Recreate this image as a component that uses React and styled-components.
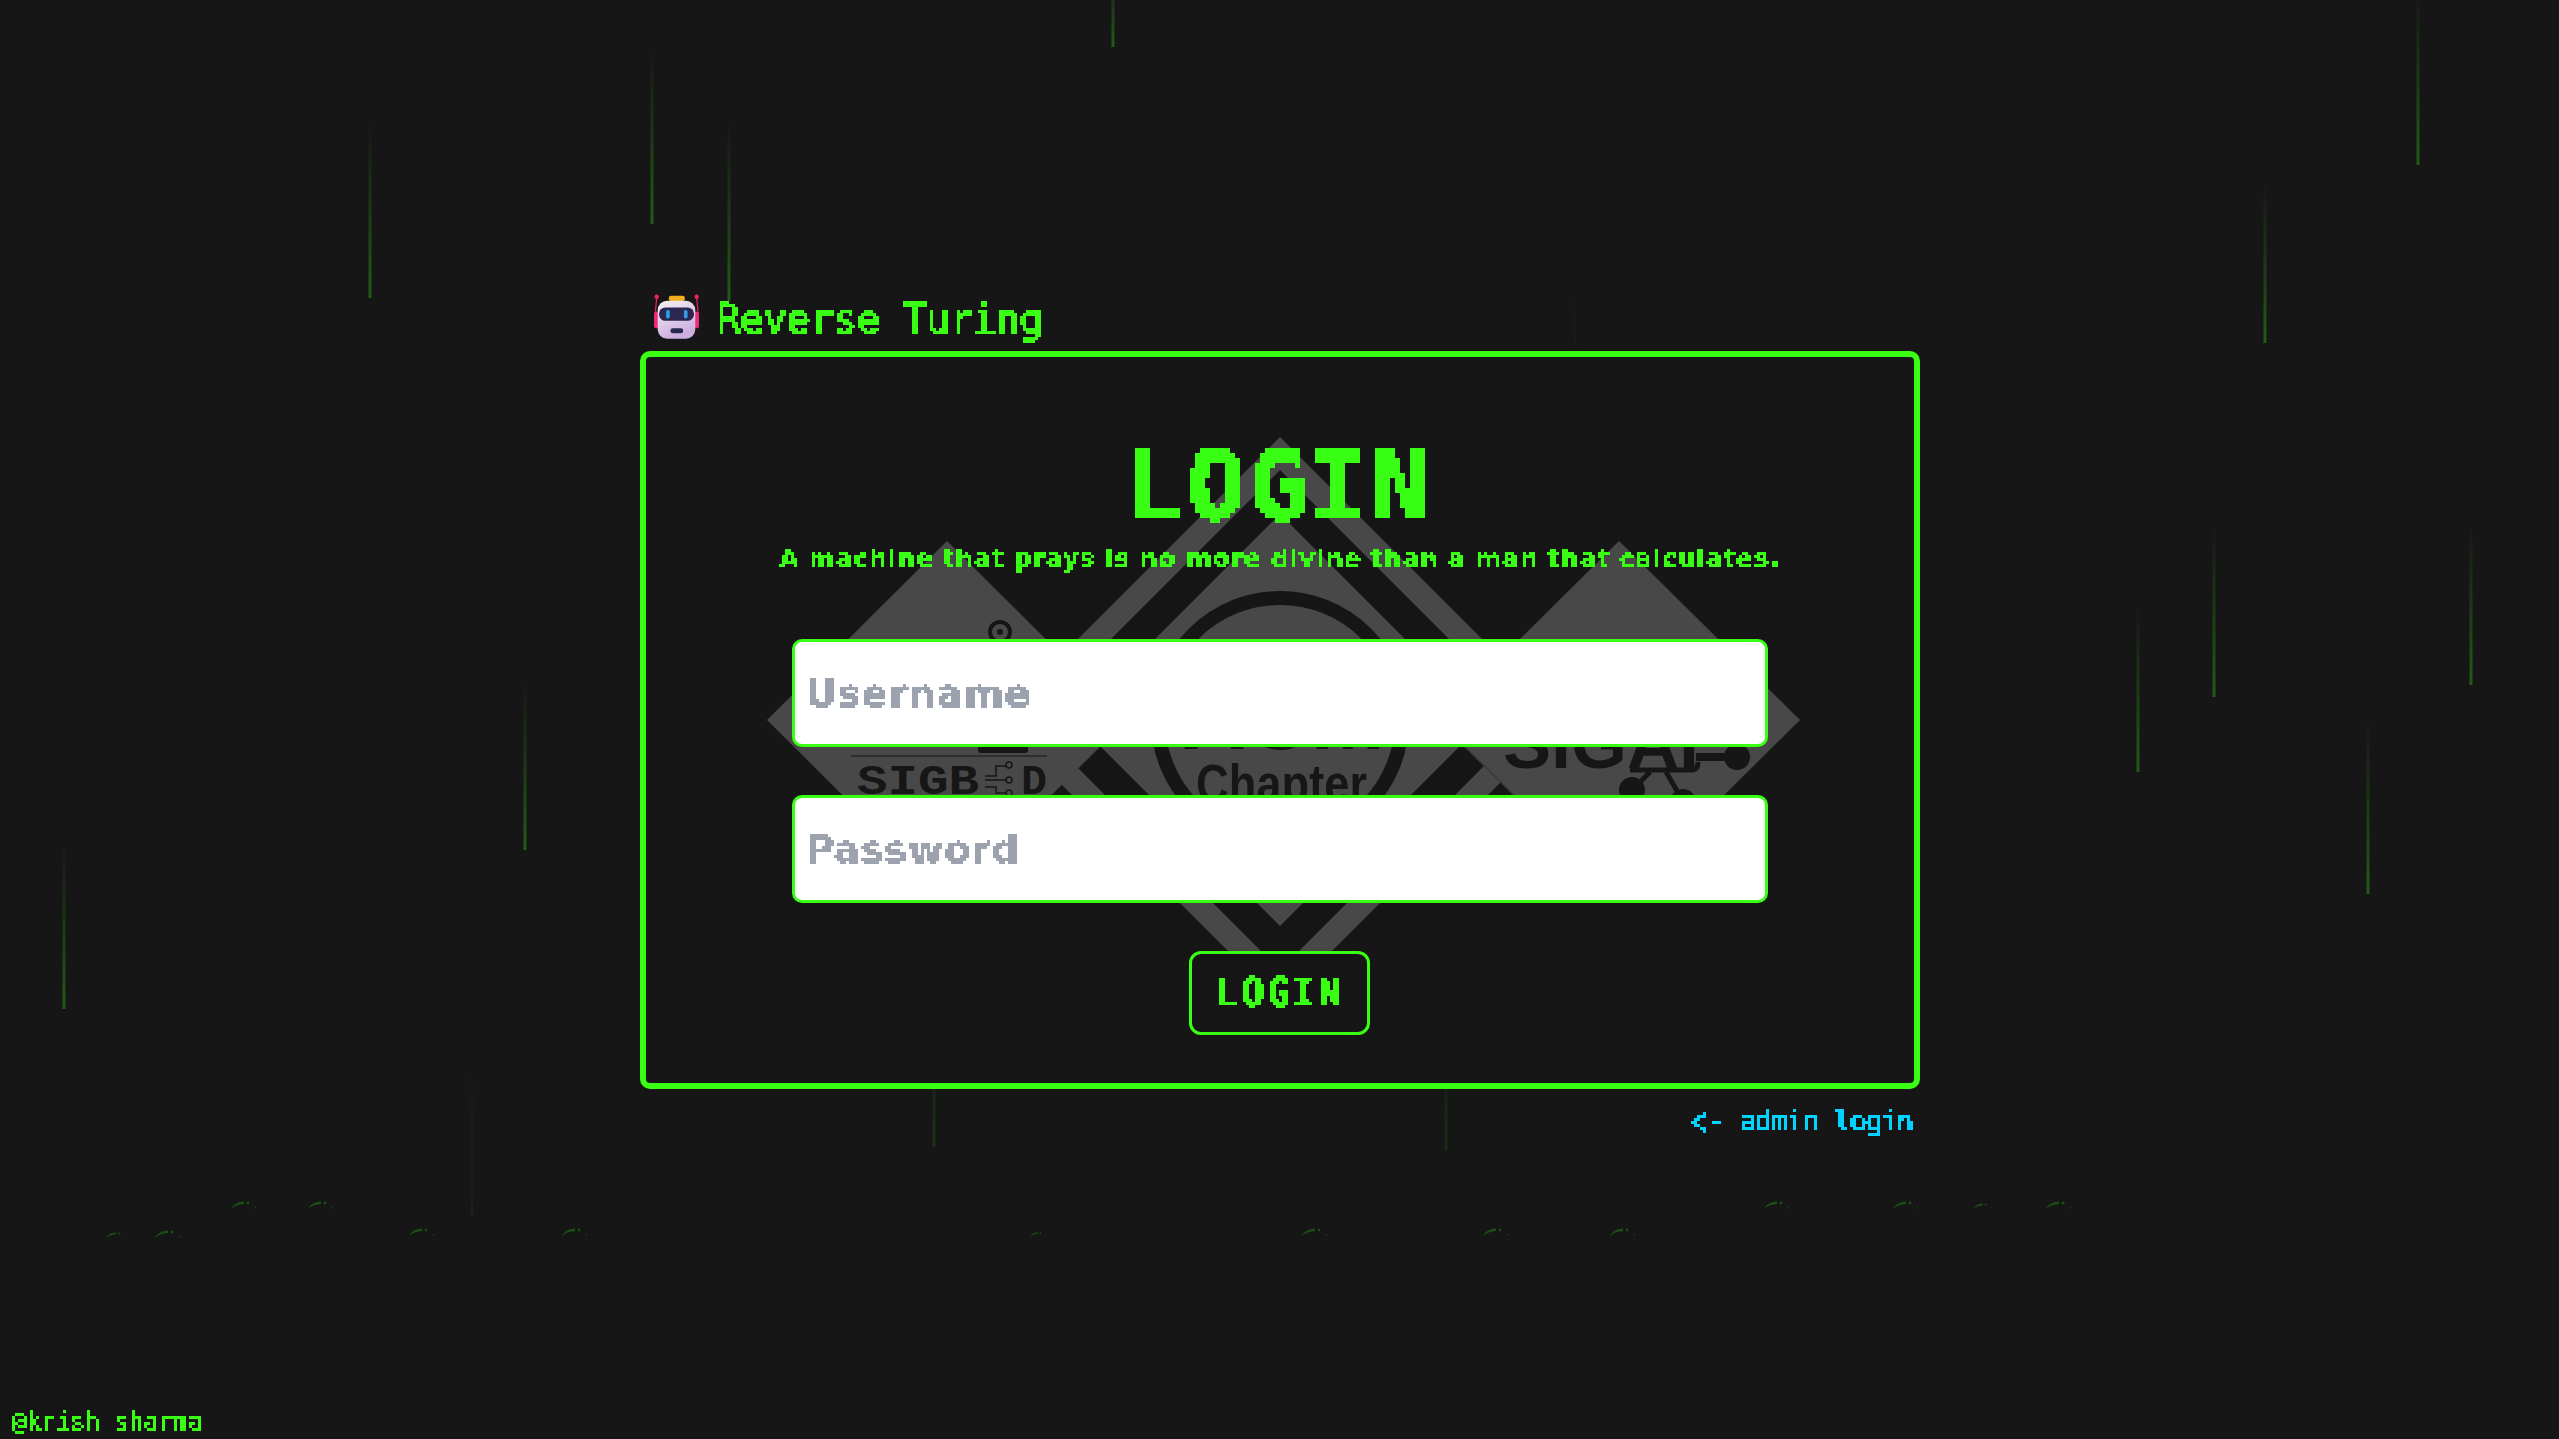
import React from "react";
import styled, { createGlobalStyle } from "styled-components";

const NEON = "#39ff14";
const BG = "#161616";
const MARK = "#484848";

// x, top, bottom, strength of the falling drops
const drops = [
  [1113, -40, 47, 0.3], [652, 47, 224, 0.3], [370, 120, 298, 0.3], [729, 120, 301, 0.3],
  [2418, -10, 165, 0.3], [2265, 180, 343, 0.3], [525, 677, 850, 0.3], [64, 840, 1009, 0.3],
  [2214, 522, 697, 0.3], [2471, 522, 685, 0.3], [2138, 604, 772, 0.3], [2368, 718, 894, 0.3],
  [934, 1000, 1147, 0.12], [1446, 1000, 1150, 0.1], [472, 1040, 1217, 0.05], [1575, 280, 345, 0.02],
];

const splashes = [
  [231, 1201], [308, 1201], [106, 1232, 0.75], [155, 1230], [409, 1228], [562, 1228], [1030, 1232, 0.6],
  [1302, 1228], [1483, 1228], [1610, 1228], [1764, 1201], [1893, 1201], [1973, 1203, 0.75], [2046, 1201],
];

const pixelFilters = [1, 2, 3];

const GlobalStyle = createGlobalStyle`
  html, body {
    margin: 0;
    padding: 0;
    background: ${BG};
  }
  * {
    box-sizing: border-box;
  }
`;

const Page = styled.div`
  position: relative;
  height: 100vh;
  overflow: hidden;
  display: flex;
  flex-direction: column;
  align-items: center;
  justify-content: center;
  background: ${BG};
  font-family: "DejaVu Sans Mono", "Liberation Mono", monospace;
`;

const FilterDefs = styled.svg`
  position: absolute;
  width: 0;
  height: 0;
`;

const RainLayer = styled.svg`
  position: absolute;
  inset: 0;
  width: 100%;
  height: 100%;
`;

const Wrapper = styled.div`
  position: relative;
  width: 1280px;
  display: flex;
  flex-direction: column;
`;

const Brand = styled.div`
  height: 57px;
  padding-left: 13px;
  display: flex;
  align-items: flex-start;
  gap: 17px;
`;

const BrandName = styled.span`
  margin-top: 1px;
  font-size: 40px;
  line-height: 48px;
  letter-spacing: -0.8px;
  -webkit-text-stroke: 1px ${NEON};
  color: ${NEON};
  filter: url(#px1);
`;

const Card = styled.div`
  position: relative;
  height: 738px;
  padding: 81px 0 48px;
  display: flex;
  flex-direction: column;
  align-items: center;
  background: ${BG};
  border: 6px solid ${NEON};
  border-radius: 10px;
`;

const Watermark = styled.svg`
  position: absolute;
  left: 114px;
  top: 73px;
  width: 1050px;
  height: 600px;
`;

const Title = styled.h1`
  position: relative;
  margin: 0;
  font-size: 96px;
  line-height: 96px;
  font-weight: 700;
  letter-spacing: 3.5px;
  padding: 0 6px;
  -webkit-text-stroke: 2px ${NEON};
  color: ${NEON};
  filter: url(#px2);
`;

const Subtitle = styled.p`
  position: relative;
  margin: 9px 0 0;
  font-family: "DejaVu Sans", "Liberation Sans", sans-serif;
  font-size: 25px;
  line-height: 32px;
  font-weight: 700;
  letter-spacing: 0.8px;
  color: ${NEON};
  filter: url(#px1);
`;

const Form = styled.form`
  position: relative;
  margin-top: 64px;
  width: 976px;
  display: flex;
  flex-direction: column;
  align-items: center;
  gap: 48px;
`;

const InputBox = styled.div`
  width: 100%;
  height: 108px;
  background: #fff;
  border: 3px solid ${NEON};
  border-radius: 10px;
`;

const Input = styled.input`
  width: 100%;
  height: 100%;
  padding: 2px 11px 0;
  border: none;
  outline: none;
  background: transparent;
  font-family: "DejaVu Sans", "Liberation Sans", sans-serif;
  font-size: 39px;
  font-weight: 700;
  letter-spacing: 0.5px;
  filter: url(#px1);

  &::placeholder {
    color: #9ca3af;
    opacity: 1;
  }
`;

const LoginButton = styled.button`
  width: 181px;
  height: 84px;
  padding: 0;
  background: ${BG};
  border: 3px solid ${NEON};
  border-radius: 12px;
  font-family: inherit;
  color: ${NEON};
  cursor: pointer;
`;

const ButtonLabel = styled.span`
  display: block;
  font-size: 39px;
  line-height: 48px;
  font-weight: 700;
  letter-spacing: 2.2px;
  -webkit-text-stroke: 0.6px ${NEON};
  filter: url(#px1);
`;

const AdminLink = styled.a`
  align-self: flex-end;
  margin: 8px 7px 0 0;
  height: 49px;
  display: flex;
  align-items: center;
  font-size: 28px;
  line-height: 47px;
  letter-spacing: -1.1px;
  white-space: pre;
  -webkit-text-stroke: 0.7px #00d4ff;
  color: #00d4ff;
  cursor: pointer;
  filter: url(#px1);
`;

const LinkArrow = styled.span`
  display: inline-block;
  width: 17px;
  font-size: 46px;
  line-height: 47px;
  -webkit-text-stroke: 0;
  transform: scaleX(0.62);
  transform-origin: left center;
`;

const Credit = styled.div`
  position: absolute;
  left: 12px;
  bottom: 2px;
  font-size: 24px;
  line-height: 30px;
  letter-spacing: 0.2px;
  -webkit-text-stroke: 0.6px ${NEON};
  color: ${NEON};
  filter: url(#px1);
`;

const RobotIcon = () => (
  <svg width="47" height="47" viewBox="40 40 140 140">
    <defs>
      <linearGradient id="robotBody" x1="0" y1="0" x2="0.4" y2="1">
        <stop offset="0" stopColor="#f4f0f4" />
        <stop offset="1" stopColor="#cdaee0" />
      </linearGradient>
    </defs>
    <path d="M51 52 L47 92 M170 52 L174 92" stroke="#f0245f" strokeWidth="3.5" fill="none" />
    <circle cx="51" cy="48" r="6.5" fill="#f0245f" />
    <circle cx="170" cy="48" r="6.5" fill="#f0245f" />
    <rect x="43" y="92" width="14" height="50" rx="6" fill="#ee2a78" />
    <rect x="163" y="92" width="14" height="50" rx="6" fill="#ee2a78" />
    <rect x="87" y="45" width="48" height="16" rx="7" fill="#f2b01e" />
    <rect x="54" y="60" width="112" height="113" rx="28" fill="url(#robotBody)" />
    <rect x="58" y="80" width="104" height="40" rx="19" fill="#2c2750" />
    <rect x="79" y="88" width="11" height="25" rx="5" fill="#2b9fe6" />
    <rect x="132" y="88" width="11" height="25" rx="5" fill="#2b9fe6" />
    <rect x="92" y="142" width="38" height="15" rx="7" fill="#2c2750" />
  </svg>
);

const BackgroundRain = () => (
  <RainLayer viewBox="0 0 2559 1439">
    <defs>
      <linearGradient id="dropFade" x1="0" y1="0" x2="0" y2="1">
        <stop offset="0" stopColor={NEON} stopOpacity="0" />
        <stop offset="1" stopColor={NEON} stopOpacity="1" />
      </linearGradient>
    </defs>
    {drops.map(([x, top, bottom, strength]) => (
      <rect key={`${x}-${top}`} x={x - 1.5} y={top} width="3" height={bottom - top} fill="url(#dropFade)" opacity={strength} />
    ))}
    {splashes.map(([x, y, size = 1]) => (
      <g key={`${x}-${y}`} transform={`translate(${x} ${y}) scale(${size})`} fill="#1a5014">
        <path d="M0 8 C2 4 6 1 13 .5 L13 3 C8 3.5 3 5 0 8Z" />
        <circle cx="17" cy="2" r="1.4" />
        <rect x="24" y="6" width="1" height="1.5" />
      </g>
    ))}
  </RainLayer>
);

// chapter logos behind the form, coordinates follow the page
const ChapterLogos = () => (
  <Watermark viewBox="760 430 1050 600">
    <path d="M1280 437 L1563 720 L1280 1003 L997 720Z M1280 470 L1030 720 L1280 970 L1530 720Z" fill={MARK} fillRule="evenodd" />
    <path d="M1280 514 L1486 720 L1280 926 L1074 720Z" fill={MARK} />
    <circle cx="1280" cy="720" r="122" fill="none" stroke={BG} strokeWidth="14" />
    <text x="1196" y="802" fontFamily="'Liberation Sans', sans-serif" fontWeight="700" fontSize="54" textLength="171" lengthAdjust="spacingAndGlyphs" fill={BG}>Chapter</text>
    <text x="1182" y="749" fontFamily="'Liberation Sans', sans-serif" fontWeight="700" fontSize="80" textLength="203" lengthAdjust="spacingAndGlyphs" fill={BG}>ACM</text>

    <path d="M947 541 L1127 720 L947 899 L767 720Z" fill={MARK} />
    <circle cx="1000" cy="632" r="10" fill="none" stroke={BG} strokeWidth="4" />
    <circle cx="1000" cy="632" r="3" fill={BG} />
    <rect x="998" y="642" width="4" height="30" fill={BG} />
    <rect x="978" y="700" width="50" height="53" rx="3" fill={BG} />
    <rect x="851" y="755" width="196" height="2" fill="#2e2e2e" />
    <text x="857" y="794" fontFamily="'Liberation Mono', monospace" fontWeight="700" fontSize="42" textLength="122" lengthAdjust="spacingAndGlyphs" fill={BG}>SIGB</text>
    <text x="1021" y="794" fontFamily="'Liberation Mono', monospace" fontWeight="700" fontSize="42" textLength="26" lengthAdjust="spacingAndGlyphs" fill={BG}>D</text>
    <g fill="none" stroke={BG} strokeWidth="1.5">
      <path d="M985 776 H996 V766 H1006 M985 780 H1006 M985 787 H996 V793 H1006" />
      <circle cx="1009" cy="765" r="3" />
      <circle cx="1009" cy="780" r="3" />
      <circle cx="1009" cy="793" r="3" />
    </g>

    <path d="M1619 541 L1800 720 L1619 899 L1438 720Z" fill={MARK} />
    <path d="M1438 720 L1619 899" stroke="#3a3a3a" strokeWidth="1.5" fill="none" />
    <text x="1503" y="768" fontFamily="'Liberation Sans', sans-serif" fontWeight="700" fontSize="70" textLength="196" lengthAdjust="spacingAndGlyphs" fill={BG}>SIGAI</text>
    <g fill={BG}>
      <circle cx="1737" cy="757" r="13" />
      <circle cx="1632" cy="790" r="13" />
      <circle cx="1683" cy="802" r="13" />
      <rect x="1696" y="753" width="40" height="8" />
    </g>
    <path d="M1630 770 H1692 Q1698 770 1698 762 M1650 772 L1636 786 M1666 772 L1680 796" stroke={BG} strokeWidth="5" fill="none" />
  </Watermark>
);

const App = () => {
  return (
    <Page>
      <GlobalStyle />
      <FilterDefs aria-hidden="true">
        {pixelFilters.map((r) => (
          <filter key={r} id={`px${r}`} x="0" y="0" width="100%" height="100%" colorInterpolationFilters="sRGB">
            <feFlood x={r} y={r} width="1" height="1" />
            <feComposite width={2 * r + 1} height={2 * r + 1} />
            <feTile result="grid" />
            <feComposite in="SourceGraphic" in2="grid" operator="in" />
            <feMorphology operator="dilate" radius={r} />
            <feComponentTransfer>
              <feFuncA type="discrete" tableValues="0 1 1" />
            </feComponentTransfer>
          </filter>
        ))}
      </FilterDefs>
      <BackgroundRain />

      <Wrapper>
        <Brand>
          <RobotIcon />
          <BrandName>Reverse Turing</BrandName>
        </Brand>

        <Card>
          <ChapterLogos />
          <Title>LOGIN</Title>
          <Subtitle>A machine that prays is no more divine than a man that calculates.</Subtitle>
          <Form>
            <InputBox>
              <Input type="text" placeholder="Username" />
            </InputBox>
            <InputBox>
              <Input type="password" placeholder="Password" />
            </InputBox>
            <LoginButton type="button">
              <ButtonLabel>LOGIN</ButtonLabel>
            </LoginButton>
          </Form>
        </Card>

        <AdminLink><LinkArrow>&lt;</LinkArrow>- admin login</AdminLink>
      </Wrapper>

      <Credit>@krish sharma</Credit>
    </Page>
  );
};

export default App;
